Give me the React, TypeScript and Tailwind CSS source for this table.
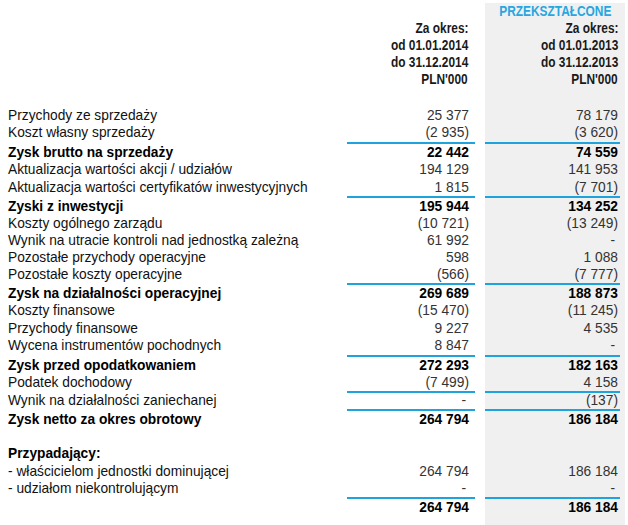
import React from 'react';

type Row = {
  label: string;
  a: string;
  b: string;
  h: number;
  bold?: boolean;
  line?: boolean;
};

const rows: Row[] = [
  { label: 'Przychody ze sprzedaży', a: '25 377', b: '78 179', h: 17 },
  { label: 'Koszt własny sprzedaży', a: '(2 935)', b: '(3 620)', h: 18 },
  { label: 'Zysk brutto na sprzedaży', a: '22 442', b: '74 559', h: 17, bold: true, line: true },
  { label: 'Aktualizacja wartości akcji / udziałów', a: '194 129', b: '141 953', h: 18 },
  { label: 'Aktualizacja wartości certyfikatów inwestycyjnych', a: '1 815', b: '(7 701)', h: 17 },
  { label: 'Zyski z inwestycji', a: '195 944', b: '134 252', h: 17, bold: true, line: true },
  { label: 'Koszty ogólnego zarządu', a: '(10 721)', b: '(13 249)', h: 17 },
  { label: 'Wynik na utracie kontroli nad jednostką zależną', a: '61 992', b: '-', h: 17 },
  { label: 'Pozostałe przychody operacyjne', a: '598', b: '1 088', h: 17 },
  { label: 'Pozostałe koszty operacyjne', a: '(566)', b: '(7 777)', h: 17 },
  { label: 'Zysk na działalności operacyjnej', a: '269 689', b: '188 873', h: 17, bold: true, line: true },
  { label: 'Koszty finansowe', a: '(15 470)', b: '(11 245)', h: 18 },
  { label: 'Przychody finansowe', a: '9 227', b: '4 535', h: 17 },
  { label: 'Wycena instrumentów pochodnych', a: '8 847', b: '-', h: 18 },
  { label: 'Zysk przed opodatkowaniem', a: '272 293', b: '182 163', h: 17, bold: true, line: true },
  { label: 'Podatek dochodowy', a: '(7 499)', b: '4 158', h: 17 },
  { label: 'Wynik na działalności zaniechanej', a: '-', b: '(137)', h: 16, line: true },
  { label: 'Zysk netto za okres obrotowy', a: '264 794', b: '186 184', h: 17, bold: true, line: true },
  { label: '', a: '', b: '', h: 17 },
  { label: 'Przypadający:', a: '', b: '', h: 18, bold: true },
  { label: '- właścicielom jednostki dominującej', a: '264 794', b: '186 184', h: 17 },
  { label: '- udziałom niekontrolującym', a: '-', b: '-', h: 17 },
  { label: '', a: '264 794', b: '186 184', h: 17, bold: true, line: true },
];

const header = [
  { a: '', b: 'PRZEKSZTAŁCONE', blue: true },
  { a: 'Za okres:', b: 'Za okres:' },
  { a: 'od 01.01.2014', b: 'od 01.01.2013' },
  { a: 'do 31.12.2014', b: 'do 31.12.2013' },
  { a: "PLN'000", b: "PLN'000" },
];

// header uses a condensed bold face; squeeze Liberation Sans to mimic Arial Narrow
function Narrow({ children, center }: { children: React.ReactNode; center?: boolean }) {
  return (
    <span className={`inline-block whitespace-nowrap scale-x-[0.82] ${center ? 'origin-center' : 'origin-right'}`}>
      {children}
    </span>
  );
}

function Value({ v }: { v: string }) {
  return <span className={v === '-' ? 'pr-[3px]' : ''}>{v}</span>;
}

export default function App() {
  return (
    <div className="flex h-[525px] w-[628px] flex-col bg-white pt-[3px] font-['Liberation_Sans',Arial,sans-serif] text-[13.75px] text-[#111]">
      {header.map((h, i) => (
        <div key={i} className="flex h-[17px] items-center text-[14.5px] leading-none font-bold">
          <div className="flex-1" />
          <div className="w-[128px] pr-[7px] text-right text-[#1a1a1a]">{h.a && <Narrow>{h.a}</Narrow>}</div>
          <div className="w-[10px]" />
          {h.blue ? (
            <div className="flex h-full w-[140px] items-center justify-center bg-[#f0f0f0] text-[#27a6e0]">
              <Narrow center>{h.b}</Narrow>
            </div>
          ) : (
            <div className="flex h-full w-[140px] items-center justify-end bg-[#f0f0f0] pr-[7px] text-[#1a1a1a]">
              <Narrow>{h.b}</Narrow>
            </div>
          )}
          <div className="w-[3px]" />
        </div>
      ))}
      <div className="flex h-[19px]">
        <div className="flex-1" />
        <div className="w-[138px]" />
        <div className="w-[140px] bg-[#f0f0f0]" />
        <div className="w-[3px]" />
      </div>
      {rows.map((r, i) => (
        <div key={i} className={`flex leading-none ${r.bold ? 'font-bold text-black' : ''}`}>
          <div className={`flex flex-1 items-end pl-[8px] ${r.line ? 'pt-[2px]' : ''}`}>
            <div className="flex items-center whitespace-nowrap" style={{ height: r.h }}>
              {r.label}
            </div>
          </div>
          <div
            className={`flex w-[128px] items-center justify-end pr-[6px] ${r.bold ? '' : 'text-[#333]'} ${
              r.line ? 'border-t-2 border-[#1fa3dc]' : ''
            }`}
          >
            <div className="flex items-center" style={{ height: r.h }}>
              <Value v={r.a} />
            </div>
          </div>
          <div className="w-[10px]" />
          <div className="w-[140px] bg-[#f0f0f0] pr-[5px]">
            <div
              className={`flex h-full items-center justify-end pr-[2px] ${r.bold ? '' : 'text-[#333]'} ${
                r.line ? 'border-t-2 border-[#1fa3dc]' : ''
              }`}
            >
              <div className="flex items-center" style={{ height: r.h }}>
                <Value v={r.b} />
              </div>
            </div>
          </div>
          <div className="w-[3px]" />
        </div>
      ))}
      <div className="flex flex-1">
        <div className="flex-1" />
        <div className="w-[138px]" />
        <div className="w-[140px] bg-[#f0f0f0]" />
        <div className="w-[3px]" />
      </div>
    </div>
  );
}
